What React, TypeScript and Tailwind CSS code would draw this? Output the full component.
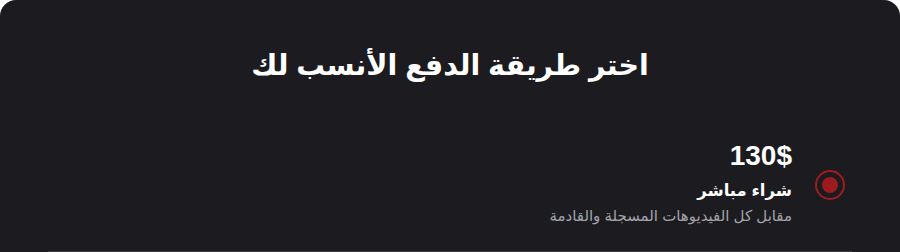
export default function App() {
  return (
    <div className="w-[900px] h-[252px] overflow-hidden bg-white" style={{ fontFamily: '"Liberation Sans", "DejaVu Sans", sans-serif' }}>
      <div dir="rtl" className="h-[400px] bg-[#1c1b20] rounded-t-[16px] px-12 pt-[41px]">
        <h1 className="text-center text-white font-bold text-[28.5px] leading-[48px]">اختر طريقة الدفع الأنسب لك</h1>
        <div className="mt-[51px] flex items-start gap-[23px] pr-[7px] h-[111px]">
          <div className="mt-[30px] w-[30px] h-[30px] rounded-full border-2 border-[#9f1c20] flex items-center justify-center shrink-0">
            <div className="w-4 h-4 rounded-full bg-[#9b1b1f]" />
          </div>
          <div className="flex flex-col">
            <div dir="ltr" className="text-right text-white font-bold text-[28px] leading-[32px]">130$</div>
            <div className="text-white font-bold text-[16.5px] leading-[26px] mt-[5px]">شراء مباشر</div>
            <div className="text-[#a3a3ab] text-[15px] leading-[22px] mt-[2px]">مقابل كل الفيديوهات المسجلة والقادمة</div>
          </div>
        </div>
        <div className="border-t border-[#3a3a40] h-10" />
      </div>
    </div>
  );
}
